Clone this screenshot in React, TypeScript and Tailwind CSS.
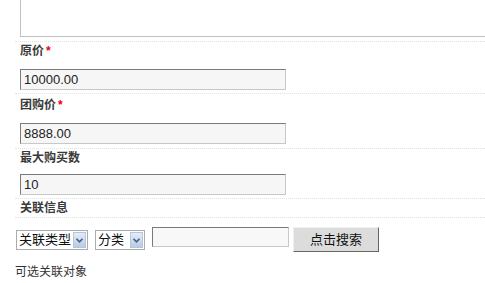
import React from "react";

const font = { fontFamily: '"Liberation Sans", "Noto Sans CJK SC", sans-serif' };

function Field({ value }: { value: string }) {
  return (
    <div className="w-[266px] h-[21px] bg-[#f6f6f6] border border-t-[#7a7a7a] border-l-[#7a7a7a] border-r-[#c8c8c8] border-b-[#c8c8c8] pl-[3px] text-[13px] leading-[19px] text-[#222]">
      {value}
    </div>
  );
}

function Sel({ label, w }: { label: string; w: string }) {
  return (
    <div className={`${w} h-[20px] bg-white border border-[#a5acb2] flex items-stretch mt-[3px]`}>
      <div className="flex-1 pl-[2px] text-[13px] leading-[18px] text-[#111]">{label}</div>
      <div className="w-[13px] my-[1px] mr-[1px] bg-gradient-to-b from-[#e4ecf7] to-[#b8cbe6] border border-[#b5c5dc] flex items-center justify-center">
        <svg width="7" height="5" viewBox="0 0 7 5">
          <path d="M0.5 0.8 L3.5 3.8 L6.5 0.8" stroke="#4d6185" strokeWidth="1.6" fill="none" />
        </svg>
      </div>
    </div>
  );
}

export default function App() {
  return (
    <div className="w-[485px] h-[283px] bg-white overflow-hidden text-[12px] text-[#333]" style={font}>
      <div className="ml-[20px] h-[37px] border-l border-b border-[#c0c0c0]" />
      <div className="pl-[15px] mt-[4px]">
        <div className="border-t border-dotted border-[#dce2dc] pl-[5px] pt-[1px] pb-[3px]">
          <div className="h-[16px] leading-[16px] font-bold text-[#3a3a3a]">原价<span className="ml-[2px] text-[#e00]">*</span></div>
          <div className="mt-[10px]"><Field value="10000.00" /></div>
        </div>
        <div className="border-t border-dotted border-[#dce2dc] pl-[5px] pt-[3px] pb-[4px]">
          <div className="h-[16px] leading-[16px] font-bold text-[#3a3a3a]">团购价<span className="ml-[2px] text-[#e00]">*</span></div>
          <div className="mt-[10px]"><Field value="8888.00" /></div>
        </div>
        <div className="border-t border-dotted border-[#dce2dc] pl-[5px] pt-[1px] pb-[3px]">
          <div className="h-[16px] leading-[16px] font-bold text-[#3a3a3a]">最大购买数</div>
          <div className="mt-[8px]"><Field value="10" /></div>
        </div>
        <div className="border-t border-b border-dotted border-[#dce2dc] pl-[5px] pt-[1px] pb-[1px]">
          <div className="h-[16px] leading-[16px] font-bold text-[#3a3a3a]">关联信息</div>
        </div>
        <div className="flex items-start mt-[9px] ml-[1px]">
          <Sel label="关联类型" w="w-[72px]" />
          <div className="ml-[7px]"><Sel label="分类" w="w-[50px]" /></div>
          <div className="ml-[7px] w-[137px] h-[20px] bg-[#f8f8f8] border border-t-[#7a7a7a] border-l-[#7a7a7a] border-r-[#c8c8c8] border-b-[#c8c8c8]" />
          <div className="ml-[4px] w-[86px] h-[25px] bg-[#dcdcdc] border border-t-[#f0f0f0] border-l-[#f0f0f0] border-r-[#666] border-b-[#666] flex items-center justify-center text-[13px] text-[#111]">
            点击搜索
          </div>
        </div>
        <div className="mt-[12px] h-[16px] leading-[16px] text-[#333]">可选关联对象</div>
      </div>
    </div>
  );
}
